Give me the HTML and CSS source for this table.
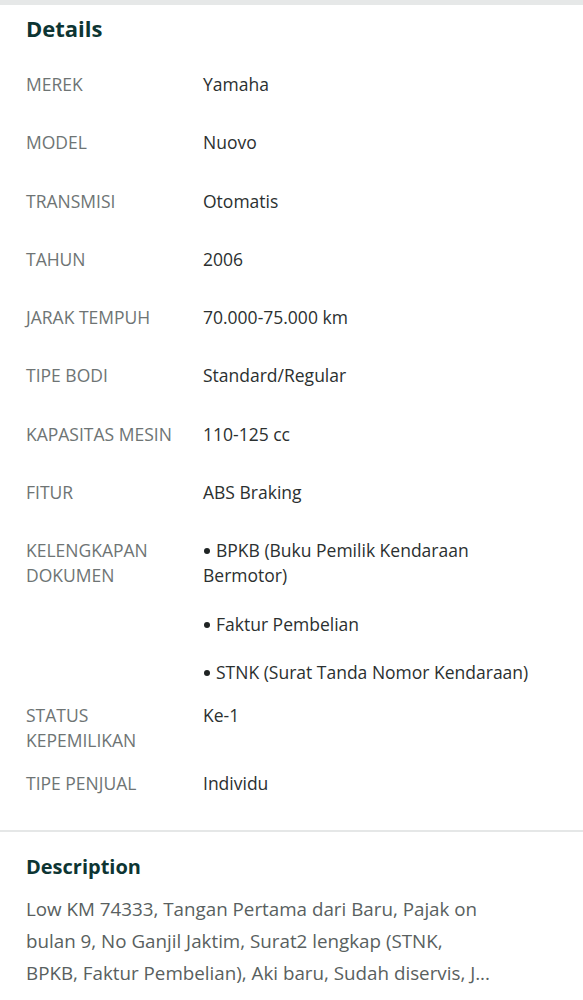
FILE: index.html
```html
<!DOCTYPE html>
<html>
<head>
<meta charset="utf-8">
<link rel="stylesheet" href="styles.css">
</head>
<body>
<div class="topbar"></div>
<section class="details">
  <h2 class="title">Details</h2>
  <div class="row"><div class="label">MEREK</div><div class="value">Yamaha</div></div>
  <div class="row"><div class="label">MODEL</div><div class="value">Nuovo</div></div>
  <div class="row"><div class="label">TRANSMISI</div><div class="value">Otomatis</div></div>
  <div class="row"><div class="label">TAHUN</div><div class="value">2006</div></div>
  <div class="row"><div class="label">JARAK TEMPUH</div><div class="value">70.000-75.000 km</div></div>
  <div class="row"><div class="label">TIPE BODI</div><div class="value">Standard/Regular</div></div>
  <div class="row"><div class="label">KAPASITAS MESIN</div><div class="value">110-125 cc</div></div>
  <div class="row"><div class="label">FITUR</div><div class="value">ABS Braking</div></div>
  <div class="row"><div class="label">KELENGKAPAN DOKUMEN</div>
    <ul class="value list">
      <li>BPKB (Buku Pemilik Kendaraan Bermotor)</li>
      <li>Faktur Pembelian</li>
      <li>STNK (Surat Tanda Nomor Kendaraan)</li>
    </ul>
  </div>
  <div class="row"><div class="label">STATUS KEPEMILIKAN</div><div class="value">Ke-1</div></div>
  <div class="row"><div class="label">TIPE PENJUAL</div><div class="value">Individu</div></div>
</section>
<section class="desc">
  <h2 class="subtitle">Description</h2>
  <p class="desc-text">Low KM 74333, Tangan Pertama dari Baru, Pajak on bulan 9, No Ganjil Jaktim, Surat2 lengkap (STNK, BPKB, Faktur Pembelian), Aki baru, Sudah diservis, J...</p>
</section>
</body>
</html>
```
FILE: styles.css
```css
* { box-sizing: border-box; }
html, body { margin: 0; padding: 0; background: #fff; }
body { font-family: "Open Sans", "Noto Sans", sans-serif; color: #2c3a3b; }
.topbar { height: 5px; background: #e6e8e8; }
.details { padding: 0 35px 0 26px; }
.title { margin: 0; padding-top: 7px; font-size: 22px; line-height: 32px; font-weight: 700; color: #0d3533; height: 58px; }
.row { display: flex; min-height: 58.3px; padding: 9px 0; line-height: 25px; font-size: 17.5px; }
.label { width: 177px; flex: none; color: #6e7474; padding-right: 12px; }
.value { flex: 1; color: #2b3030; }
.list { list-style: none; margin: 0; padding: 0; }
.list li + li { margin-top: 23.5px; }
.list li::before { content: ""; display: inline-block; width: 6px; height: 6px; border-radius: 50%; background: #1f2424; margin: 0 6px 0 1px; vertical-align: 3px; }
.desc { border-top: 2px solid #e5e7e7; margin-top: 9px; padding: 21px 26px 0 26px; }
.subtitle { margin: 0; font-size: 20px; line-height: 28px; font-weight: 700; color: #0d3533; }
.desc-text { margin: 12px 0 0 0; max-width: 470px; font-size: 18.8px; line-height: 32px; color: #595f60; }
```
